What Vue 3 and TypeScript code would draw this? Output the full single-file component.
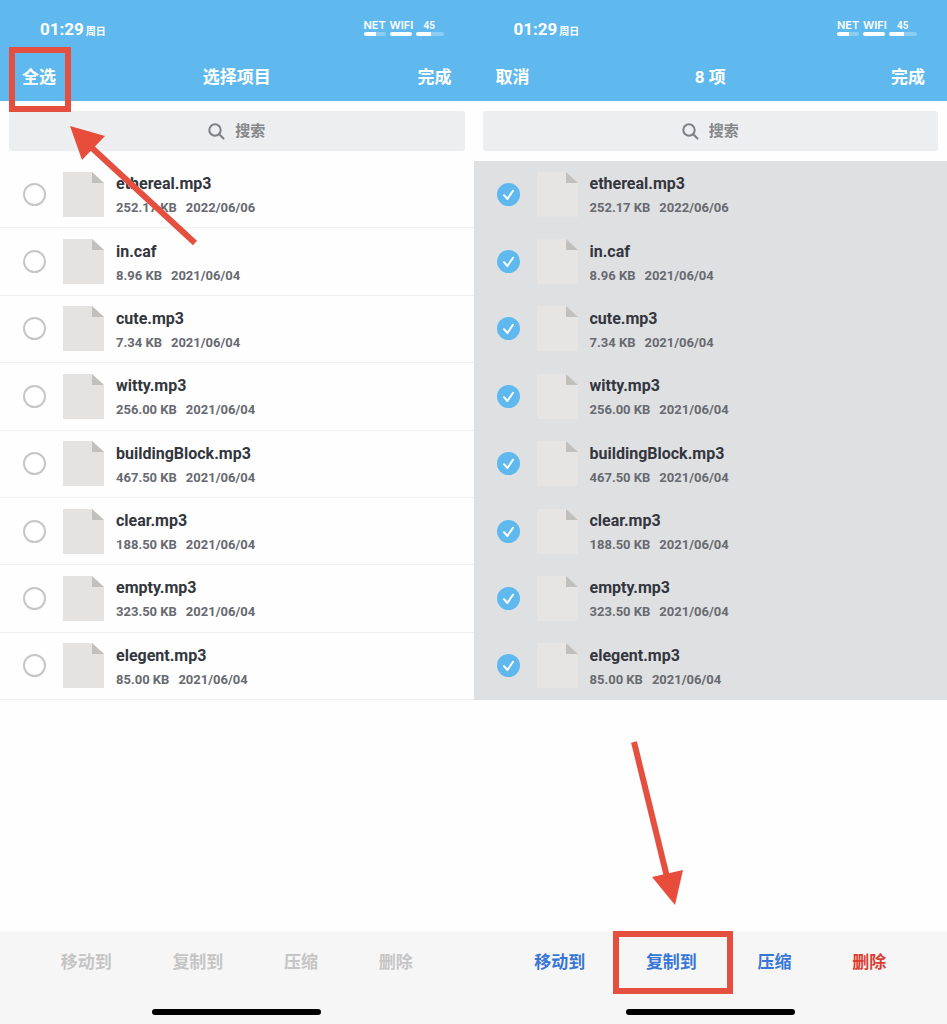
<script setup lang="ts">
import { ref } from 'vue'

interface FileItem {
  name: string
  size: string
  date: string
}

interface Screen {
  id: string
  left: string
  title: string
  active: boolean
  selected: boolean[]
}

const files: FileItem[] = [
  { name: 'ethereal.mp3', size: '252.17 KB', date: '2022/06/06' },
  { name: 'in.caf', size: '8.96 KB', date: '2021/06/04' },
  { name: 'cute.mp3', size: '7.34 KB', date: '2021/06/04' },
  { name: 'witty.mp3', size: '256.00 KB', date: '2021/06/04' },
  { name: 'buildingBlock.mp3', size: '467.50 KB', date: '2021/06/04' },
  { name: 'clear.mp3', size: '188.50 KB', date: '2021/06/04' },
  { name: 'empty.mp3', size: '323.50 KB', date: '2021/06/04' },
  { name: 'elegent.mp3', size: '85.00 KB', date: '2021/06/04' },
]

const screens = ref<Screen[]>([
  { id: 'before', left: '全选', title: '选择项目', active: false, selected: files.map(() => false) },
  { id: 'after', left: '取消', title: '8 项', active: true, selected: files.map(() => true) },
])

const actions = ['移动到', '复制到', '压缩', '删除']
</script>

<template>
  <main class="page">
    <section v-for="screen in screens" :key="screen.id" class="phone">
      <header class="top">
        <div class="status">
          <div class="clock"><span class="time">01:29</span><span class="day">周日</span></div>
          <div class="meters">
            <span class="meter net">NET<i class="bar"></i></span>
            <span class="meter wifi">WIFI<i class="bar"></i></span>
            <span class="meter battery">45<i class="bar"></i></span>
          </div>
        </div>
        <nav class="nav">
          <button type="button">{{ screen.left }}<span v-if="!screen.active" class="frame frame-all"></span></button>
          <h1>{{ screen.title }}</h1>
          <button type="button">完成</button>
        </nav>
      </header>

      <label class="search">
        <svg viewBox="0 0 17 17" aria-hidden="true">
          <circle cx="7" cy="7" r="5.7" />
          <path d="M11.2 11.2L15.5 15.5" />
        </svg>
        <input type="text" placeholder="搜索" aria-label="搜索" />
      </label>

      <ul class="files">
        <li v-for="(file, i) in files" :key="file.name">
          <label class="row" :class="{ chosen: screen.selected[i] }">
            <span class="tick">
              <input v-model="screen.selected[i]" type="checkbox" />
              <svg viewBox="0 0 23 23" aria-hidden="true"><path d="M7 12.2L10.4 16L16 7.8" /></svg>
            </span>
            <svg class="doc" viewBox="0 0 41 45" aria-hidden="true">
              <path class="sheet" d="M0 0H29L41 11V45H0Z" />
              <path class="fold" d="M29 0L41 11H29Z" />
            </svg>
            <span class="info">
              <span class="name">{{ file.name }}</span>
              <span class="meta"><span>{{ file.size }}</span><span>{{ file.date }}</span></span>
            </span>
          </label>
        </li>
      </ul>

      <footer class="bottom">
        <div class="actions" :class="{ active: screen.active }">
          <button v-for="action in actions" :key="action" type="button" :disabled="!screen.active">
            {{ action }}<span v-if="screen.active && action === '复制到'" class="frame frame-copy"></span>
          </button>
        </div>
        <div class="home"></div>
      </footer>

      <svg v-if="!screen.active" class="arrow arrow-all" viewBox="0 0 130 122" aria-hidden="true">
        <path class="shaft" d="M22 22L125 117" />
        <path d="M0 0L35 10L12 34Z" />
      </svg>
      <svg v-else class="arrow arrow-copy" viewBox="0 0 54 164" aria-hidden="true">
        <path class="shaft" d="M4 1L37 136" />
        <path d="M45 164L22 136L53 129Z" />
      </svg>
    </section>
  </main>
</template>

<style>
body {
  margin: 0;
  background: #fff;
}
</style>

<style scoped>
.page {
  display: grid;
  grid-template-columns: 1fr 1fr;
  min-height: 100vh;
  font-family: Roboto, 'Noto Sans CJK SC', sans-serif;
  font-weight: 700;
}
.phone {
  position: relative;
  display: flex;
  flex-direction: column;
  background: #fefefe;
}
button {
  position: relative;
  padding: 0;
  border: 0;
  background: none;
  color: inherit;
  font: inherit;
}
.top {
  box-sizing: border-box;
  height: 101px;
  padding-top: 17px;
  background: #5fb9ee;
  color: #fff;
}
.status {
  display: flex;
  justify-content: space-between;
  height: 24px;
  padding: 0 30px 0 40px;
}
.clock {
  display: flex;
  align-items: baseline;
  gap: 2px;
  line-height: 24px;
}
.time {
  font-size: 17px;
}
.day {
  font-size: 10px;
}
.meters {
  display: grid;
  grid-template-columns: 22px 22px 28px;
  gap: 4px;
  padding-top: 2px;
  font-family: Inter, sans-serif;
  font-size: 11px;
  font-weight: 600;
  line-height: 13px;
}
.meter {
  display: flex;
  flex-direction: column;
}
.battery {
  font-family: Roboto, sans-serif;
  font-size: 10px;
  text-indent: 8px;
}
.bar {
  height: 4px;
  border-radius: 2px;
  background: #fff;
}
.net .bar,
.battery .bar {
  background: linear-gradient(to right, #fff 54%, #8dcdf5 54%);
}
.nav {
  display: grid;
  grid-template-columns: 1fr auto 1fr;
  align-items: center;
  height: 24px;
  margin-top: 24px;
  padding: 0 22px;
  font-size: 17px;
  line-height: 24px;
}
.nav button {
  justify-self: start;
}
.nav button:last-child {
  justify-self: end;
}
h1 {
  margin: 0;
  font: inherit;
}
.search {
  display: flex;
  align-items: center;
  justify-content: center;
  gap: 10px;
  height: 40px;
  margin: 10px 9px;
  border-radius: 3px;
  background: #edeef0;
}
.search svg {
  width: 17px;
  height: 17px;
  fill: none;
  stroke: #7d7f82;
  stroke-width: 2;
  stroke-linecap: round;
}
.search input {
  width: 30px;
  padding: 0;
  border: 0;
  outline: 0;
  background: none;
  font: inherit;
  font-size: 15px;
}
.search input::placeholder {
  color: #85878a;
  opacity: 1;
}
.files {
  display: grid;
  grid-auto-rows: 1fr;
  min-height: 539px;
  margin: 0;
  padding: 0;
  list-style: none;
}
.files li {
  display: flex;
}
.row {
  flex: 1;
  display: flex;
  align-items: center;
  padding-left: 23px;
  border-bottom: 1px solid #f0f0f1;
}
.row.chosen {
  border-color: #dfe0e2;
  background: #dfe0e2;
}
.tick {
  display: grid;
  width: 23px;
  height: 23px;
  margin-right: 17px;
}
.tick > * {
  grid-area: 1 / 1;
}
.tick input {
  appearance: none;
  width: 23px;
  height: 23px;
  margin: 0;
  box-sizing: border-box;
  border: 2px solid #c6c6c6;
  border-radius: 50%;
  background: #fff;
}
.tick input:checked {
  border-color: #5fb9ee;
  background: #5fb9ee;
}
.tick svg {
  display: none;
  position: relative;
  pointer-events: none;
  fill: none;
  stroke: #fff;
  stroke-width: 2;
  stroke-linecap: round;
  stroke-linejoin: round;
}
.chosen .tick svg {
  display: block;
}
.doc {
  width: 41px;
  height: 45px;
  margin-right: 12px;
}
.sheet {
  fill: #e4e3e1;
}
.fold {
  fill: #c2c0bd;
}
.chosen .sheet {
  fill: #e6e5e4;
}
.info {
  display: flex;
  flex-direction: column;
  padding-top: 4px;
}
.name {
  color: #33363d;
  font-size: 16px;
  line-height: 24px;
}
.meta {
  display: flex;
  gap: 9px;
  color: #676a70;
  font-size: 13px;
  line-height: 24px;
}
.bottom {
  box-sizing: border-box;
  height: 93px;
  margin-top: auto;
  padding-top: 19px;
  background: #f6f6f6;
}
.actions {
  display: flex;
  justify-content: space-evenly;
  color: #c5c5c5;
  font-size: 17px;
  line-height: 24px;
}
.actions.active {
  color: #3876d6;
}
.actions.active button:last-child {
  color: #d93d33;
}
.home {
  width: 169px;
  height: 6px;
  margin: 35px auto 0;
  border-radius: 3px;
  background: #000;
}
.frame {
  position: absolute;
  box-sizing: border-box;
  border: 6px solid #e44f40;
}
.frame-all {
  top: -18px;
  left: -13px;
  width: 62px;
  height: 65px;
}
.frame-copy {
  top: -19px;
  left: -33px;
  width: 120px;
  height: 63px;
}
.arrow {
  position: absolute;
  fill: #e84c3b;
}
.shaft {
  stroke: #e44f40;
  stroke-width: 6;
}
.arrow-all {
  top: 126px;
  left: 70px;
  width: 130px;
  height: 122px;
}
.arrow-copy {
  bottom: 119px;
  left: 156px;
  width: 54px;
  height: 164px;
}
</style>
